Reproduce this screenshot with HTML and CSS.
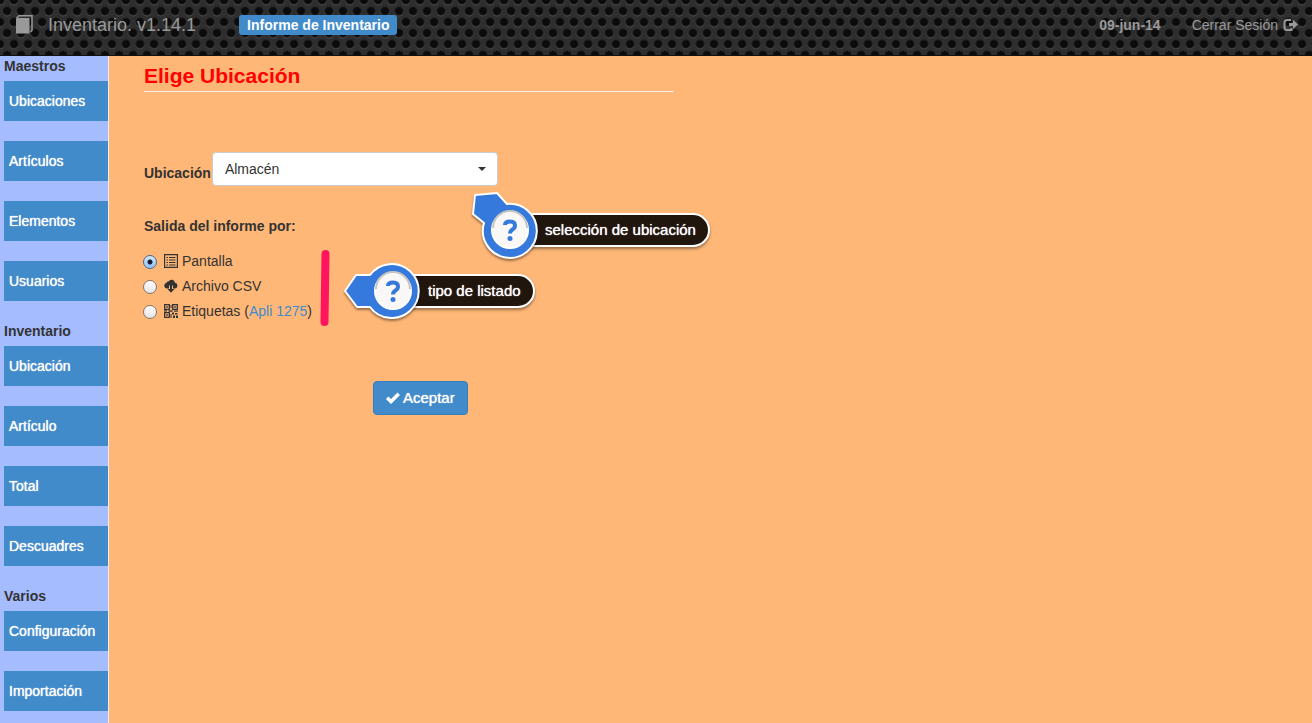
FILE: index.html
```
<!DOCTYPE html>
<html lang="es">
<head>
<meta charset="utf-8">
<title>Inventario - Informe de Inventario</title>
<link rel="stylesheet" href="styles.css">
</head>
<body>
<header class="topbar">
  <a class="brand" href="#">
    <svg width="17" height="19" viewBox="0 0 17 19" aria-hidden="true"><path d="M0 3.500 1.500 3H13.500V18.500H0z" fill="#999"/><path d="M.5 3.200 3 .8h13v14.700l-1.500 1.500" fill="none" stroke="#999" stroke-width="1.500"/></svg>
    <span>Inventario. v1.14.1</span>
  </a>
  <span class="badge">Informe de Inventario</span>
  <strong class="date">09-jun-14</strong>
  <a class="logout" href="#">Cerrar Sesión
    <svg width="15" height="14" viewBox="0 0 15 14" aria-hidden="true"><path d="M8 2H4Q1.500 2 1.500 4.500v5Q1.500 12 4 12h4.500v-2" fill="none" stroke="#999" stroke-width="2"/><path d="M6 5h4V1.800L15 6.500 10 11V8H6z" fill="#999"/></svg>
  </a>
</header>
<div class="layout">
  <nav class="sidebar">
    <h2>Maestros</h2>
    <a href="#">Ubicaciones</a>
    <a href="#">Artículos</a>
    <a href="#">Elementos</a>
    <a href="#">Usuarios</a>
    <h2>Inventario</h2>
    <a href="#">Ubicación</a>
    <a href="#">Artículo</a>
    <a href="#">Total</a>
    <a href="#">Descuadres</a>
    <h2>Varios</h2>
    <a href="#">Configuración</a>
    <a href="#">Importación</a>
  </nav>
  <main class="content">
    <form class="report">
      <h1>Elige Ubicación</h1>
      <div class="field">
        <label for="place">Ubicación</label>
        <span class="picker">
          <select id="place"><option>Almacén</option></select>
          <svg class="caret" width="8" height="4" viewBox="0 0 8 4" aria-hidden="true"><path d="M0 0h8L4 4z" fill="#333"/></svg>
        </span>
      </div>
      <fieldset class="outputs">
        <legend>Salida del informe por:</legend>
        <div class="choice">
          <input type="radio" name="out" id="screen" checked>
          <label for="screen"><svg width="14" height="14" viewBox="0 0 14 14" aria-hidden="true"><path d="M.6.600h12.800v12.800H.6z" fill="none" stroke="#333" stroke-width="1.200"/><path d="M2.500 3.500h1.500M5 3.500h6.500M2.500 6h1.500M5 6h6.500M2.500 8.500h1.500M5 8.500h6.500M2.500 11h1.500M5 11h6.500" stroke="#333" stroke-width="1.200"/></svg>Pantalla</label>
        </div>
        <div class="choice">
          <input type="radio" name="out" id="csv">
          <label for="csv"><svg width="14" height="14" viewBox="0 0 14 14" aria-hidden="true"><path d="M5 9.500H2.800A2.800 2.800 0 0 1 2.300 4 1.900 1.900 0 0 1 4.500 2.500 3.500 3.500 0 0 1 11 3.800 2.900 2.900 0 0 1 11.200 9.500H9V6.500H5z" fill="#333"/><path d="M6 6h2v4h2.500L7 13.800 3.500 10H6z" fill="#333"/></svg>Archivo CSV</label>
        </div>
        <div class="choice">
          <input type="radio" name="out" id="tags">
          <label for="tags"><svg width="14" height="14" viewBox="0 0 14 14" aria-hidden="true"><path d="M.7.700h4.600v4.600H.7zM8.700.700h4.600v4.600H8.700zM.7 8.700h4.600v4.600H.7z" fill="none" stroke="#333" stroke-width="1.300"/><path d="M2.200 2.200h1.600v1.600H2.200zM10.200 2.200h1.600v1.600h-1.600zM2.200 10.200h1.600v1.600H2.200zM6.500 1h1v3h-1zM0 6.300h3v1.200H0zM4.500 6.300h4v1.400h-4zM10 6.500h4v1.200h-4zM8 8.500h2v2H8zM11 9h2.500v1.500H11zM6.500 10h1v4h-1zM9 11.500h2V14H9zM12 11.500h2V14h-2z" fill="#333"/></svg>Etiquetas (<a href="#">Apli 1275</a>)</label>
        </div>
        <svg class="marker" width="10" height="78" viewBox="0 0 10 78" aria-hidden="true"><path d="M5.500 5 4.500 73" stroke="#ff1460" stroke-width="8" stroke-linecap="round"/></svg>
        <div class="callout callout-type">
          <span class="pill">tipo de listado</span>
          <svg class="pin" width="84" height="66" viewBox="0 0 84 66" aria-hidden="true"><g class="pin-shape"><path d="M2 33 13 17H27A27 27 0 1 1 27 49H14Z" fill="#3579dc" stroke="#fff" stroke-width="2" stroke-linejoin="round"/></g><circle cx="50" cy="33" r="18" fill="#faf8f6" stroke="#fff" stroke-width="2"/><path d="M33 31A17 17 0 0 1 67 31" fill="none" stroke="#c8c4c0" stroke-width="2"/><path d="M45 28Q45 24.500 50 24.500T55 28.500Q55 31 52.500 32.500T50 36.500" fill="none" stroke="#3579dc" stroke-width="4"/><circle cx="50" cy="41.500" r="2.500" fill="#3579dc"/></svg>
        </div>
        <div class="callout callout-place">
          <span class="pill">selección de ubicación</span>
          <svg class="pin" width="84" height="84" viewBox="0 0 84 84" aria-hidden="true"><g class="pin-shape"><path d="M15 6 37 4 47 15A27 27 0 1 1 24 34L13 25Z" fill="#3579dc" stroke="#fff" stroke-width="2" stroke-linejoin="round"/></g><circle cx="50" cy="41" r="18" fill="#faf8f6" stroke="#fff" stroke-width="2"/><path d="M33 39A17 17 0 0 1 67 39" fill="none" stroke="#c8c4c0" stroke-width="2"/><path d="M45 36Q45 32.500 50 32.500T55 36.500Q55 39 52.500 40.500T50 44.500" fill="none" stroke="#3579dc" stroke-width="4"/><circle cx="50" cy="49.500" r="2.500" fill="#3579dc"/></svg>
        </div>
      </fieldset>
      <div class="actions">
        <button type="submit"><svg width="14" height="12" viewBox="0 0 14 12" aria-hidden="true"><path d="M0 7 2.300 4.500 5 7 11.500.500 14 3 5 12z" fill="#fff"/></svg>Aceptar</button>
      </div>
    </form>
  </main>
</div>
</body>
</html>
```
FILE: styles.css
```
* { box-sizing: border-box; }
body {
  margin: 0;
  min-height: 100vh;
  display: flex;
  flex-direction: column;
  overflow-x: hidden;
  background: #ffb777;
  color: #333;
  font: 14px/20px "Liberation Sans", Arial, sans-serif;
}
a { color: #428bca; text-decoration: none; }

.topbar {
  display: flex;
  align-items: center;
  height: 56px;
  padding: 0 14px 6px 16px;
  border-bottom: 1px solid #111;
  color: #999;
  background-color: #2e2e2e;
  background-image:
    radial-gradient(circle at 7px 11px, #0b0b0b 0 3px, #191919 4px, transparent 5px),
    radial-gradient(circle at 7px 12px, #484848 4px, transparent 5px),
    radial-gradient(circle at 7px 11px, #0b0b0b 0 3px, #191919 4px, transparent 5px),
    radial-gradient(circle at 7px 12px, #484848 4px, transparent 5px);
  background-size: 14px 22px;
  background-position: 7px 11px, 7px 11px, 0 0, 0 0;
}
.brand { display: flex; align-items: center; gap: 15px; color: #999; font-size: 18px; }
.badge {
  margin-left: 43px;
  padding: 0 8px;
  border-radius: 3px;
  background: #428bca;
  color: #fff;
  font-weight: bold;
}
.date { margin-left: auto; }
.logout { display: flex; align-items: center; gap: 5px; margin-left: 31px; color: #999; }

.layout { display: flex; flex: 1; }
.sidebar {
  flex: none;
  width: 109px;
  padding-left: 4px;
  border-right: 1px solid #eee;
  background: #a5bcff;
}
.sidebar h2 { margin: 0 0 5px; font-size: 14px; line-height: 20px; }
.sidebar a {
  display: block;
  margin-bottom: 20px;
  padding: 10px 5px;
  background: #428bca;
  color: #fff;
  text-shadow: 0 0 1px #fff;
}
.sidebar a:last-child { margin-bottom: 12px; }

.content { flex: 1; padding: 8px 35px; }
.report { max-width: 530px; }
.report h1 {
  margin: 0 0 60px;
  padding-bottom: 3px;
  border-bottom: 1px solid #eee;
  color: #f00;
  font-size: 21px;
  line-height: 24px;
}
.field { display: flex; align-items: flex-end; gap: 1px; }
.field label { padding-bottom: 3px; font-weight: bold; }
.picker { position: relative; width: 286px; }
.picker select {
  display: block;
  width: 100%;
  height: 34px;
  padding: 0 30px 0 12px;
  appearance: none;
  border: 1px solid #ccc;
  border-radius: 4px;
  background: #fff;
  color: #333;
  font: inherit;
}
.caret { position: absolute; right: 12px; top: 15px; pointer-events: none; }

.outputs { position: relative; margin: 30px 0 0; padding: 0; border: 0; }
.outputs legend { margin-bottom: 12px; padding: 0; font-weight: bold; }
.choice { display: flex; align-items: center; height: 25px; gap: 7px; }
.choice label { display: flex; align-items: center; }
.choice svg { margin-right: 4px; }
.choice input {
  appearance: none;
  width: 14px;
  height: 14px;
  margin: 2px 0 0 -1px;
  border: 1px solid #887466;
  border-radius: 50%;
  background: linear-gradient(#fff, #e4e4e4);
}
.choice input:checked {
  border-color: #4a6690;
  background: radial-gradient(circle, #101c38 0 2px, transparent 3px), linear-gradient(#d6e8fb, #8fc3f2);
}
.marker { position: absolute; left: 176px; top: 1px; }

.callout { position: absolute; }
.callout-type { left: 199px; top: 10px; }
.callout-place { left: 316px; top: -59px; }
.callout .pin { display: block; position: relative; overflow: visible; }
.pin-shape { filter: drop-shadow(0 2px 1px #0006); }
.pill {
  position: absolute;
  left: 50px;
  top: 16px;
  height: 34px;
  padding: 0 12px 0 33px;
  border: 2px solid #fff;
  border-radius: 17px;
  background: #21160e;
  box-shadow: 0 2px 3px #0006;
  color: #fff;
  font-size: 15px;
  line-height: 30px;
  white-space: nowrap;
  text-shadow: 0 0 1px #fff;
}
.callout-place .pill { top: 24px; }

.actions { margin-top: 58px; padding-left: 229px; }
.actions button {
  display: flex;
  align-items: center;
  gap: 3px;
  height: 34px;
  padding: 0 12px;
  border: 1px solid #357ebd;
  border-radius: 4px;
  background: #428bca;
  color: #fff;
  font: inherit;
  font-size: 15px;
  text-shadow: 0 0 1px #fff;
}
```
